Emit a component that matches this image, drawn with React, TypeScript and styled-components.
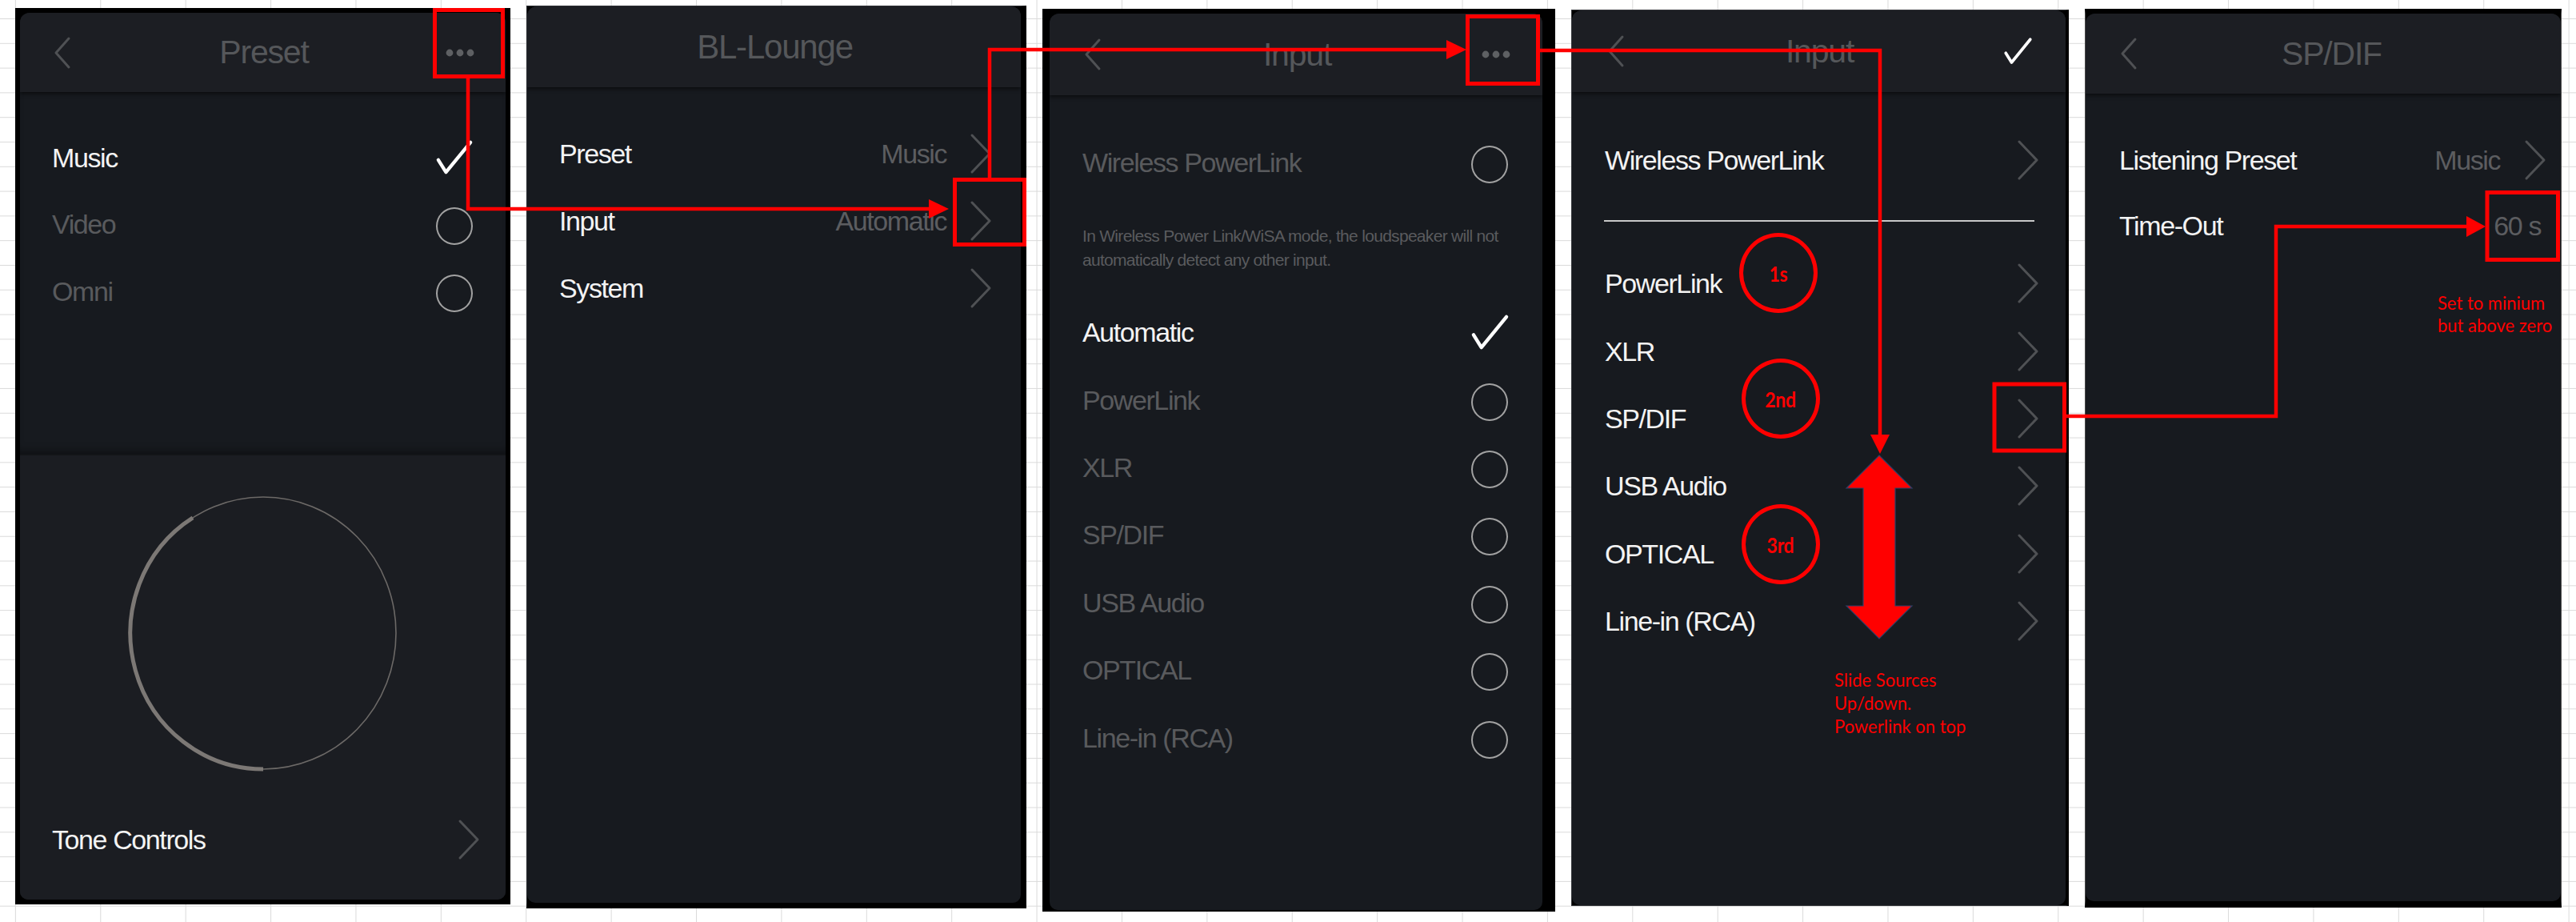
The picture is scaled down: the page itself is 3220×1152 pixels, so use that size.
import React from 'react';
import styled, { createGlobalStyle } from 'styled-components';

const GlobalStyle = createGlobalStyle`
  html, body { margin: 0; padding: 0; background: #ffffff; }
  body { font-family: "Liberation Sans", Arial, sans-serif; }
  #root { width: 3220px; height: 1152px; }
`;

const GRID = '#dadada';
const RED = '#ff0000';

const Sheet = styled.main`
  position: relative;
  box-sizing: border-box;
  width: 3220px;
  height: 1152px;
  overflow: hidden;
  padding-left: 19px;
  display: flex;
  align-items: flex-start;
  gap: 20px;
  background-color: #ffffff;
  background-image:
    linear-gradient(to right, ${GRID} 0, ${GRID} 1px, transparent 1px),
    linear-gradient(to bottom, ${GRID} 0, ${GRID} 1px, transparent 1px);
  background-size: 106.4px 100%, 100% 30.8px;
  background-position: 18.9px 0, 0 23px;
`;

type Edge = { t: string; r: string; b: string; l: string };

const Phone = styled.section<{ $w: number; $h: number; $top: number; $edge: Edge }>`
  box-sizing: border-box;
  flex: 0 0 ${p => p.$w}px;
  height: ${p => p.$h}px;
  margin-top: ${p => p.$top}px;
  background: #000;
  border-top: ${p => p.$edge.t};
  border-right: ${p => p.$edge.r};
  border-bottom: ${p => p.$edge.b};
  border-left: ${p => p.$edge.l};
  display: flex;
  flex-direction: column;
`;

const Screen = styled.div`
  flex: 1;
  min-height: 0;
  display: flex;
  flex-direction: column;
  background: #171a1f;
  border-radius: 12px 12px 10px 10px;
  overflow: hidden;
`;

const Header = styled.header<{ $h: number; $pl?: number; $pr?: number }>`
  position: relative;
  z-index: 1;
  box-sizing: border-box;
  flex: 0 0 ${p => p.$h}px;
  display: grid;
  grid-template-columns: 1fr auto 1fr;
  align-items: center;
  padding: 0 ${p => p.$pr ?? 40}px 0 ${p => p.$pl ?? 42}px;
  background: #1c1e23;
  box-shadow: 0 2px 5px rgba(0, 0, 0, 0.6);
`;

const HeaderSide = styled.div<{ $end?: boolean }>`
  display: flex;
  align-items: center;
  justify-content: ${p => (p.$end ? 'flex-end' : 'flex-start')};
`;

const Title = styled.h1<{ $size?: number; $shift?: number }>`
  margin: 0 0 0 ${p => p.$shift ?? 0}px;
  font-weight: 400;
  font-size: ${p => p.$size ?? 41}px;
  line-height: 1;
  letter-spacing: -1.2px;
  color: #55575a;
  white-space: nowrap;
`;

const Body = styled.div<{ $pt: number }>`
  flex: 1;
  min-height: 0;
  display: flex;
  flex-direction: column;
  padding-top: ${p => p.$pt}px;
`;

const Row = styled.div<{ $h?: number; $pl: number; $pr: number }>`
  flex: 0 0 ${p => p.$h ?? 84}px;
  display: flex;
  align-items: center;
  padding: 0 ${p => p.$pr}px 0 ${p => p.$pl}px;
`;

const Label = styled.span<{ $dim?: boolean }>`
  flex: 1;
  font-size: 34px;
  line-height: 1;
  letter-spacing: -1.4px;
  color: ${p => (p.$dim ? '#595a5d' : '#f3f3f3')};
  white-space: nowrap;
`;

const Value = styled.span<{ $gap?: number }>`
  font-size: 34px;
  line-height: 1;
  letter-spacing: -1.4px;
  color: #5c5d60;
  margin-right: ${p => p.$gap ?? 0}px;
  white-space: nowrap;
`;

const Radio = styled.span`
  box-sizing: border-box;
  flex: 0 0 46px;
  width: 46px;
  height: 47px;
  margin-top: 5px;
  border: 2px solid #a2a2a2;
  border-radius: 50%;
`;

const ListSection = styled.div`
  box-sizing: border-box;
  flex: 0 0 452px;
  display: flex;
  flex-direction: column;
  padding-top: 40px;
  box-shadow: inset 0 -10px 12px -8px rgba(0, 0, 0, 0.45);
`;

const KnobSection = styled.div`
  box-sizing: border-box;
  flex: 1;
  display: flex;
  flex-direction: column;
  background: #1b1d22;
  border-top: 2px solid #121418;
  padding: 48px 0 33px;
`;

const KnobWrap = styled.div`
  flex: 1;
  display: flex;
  justify-content: center;
  align-items: flex-start;
`;

const Note = styled.p`
  margin: 0;
  padding: 35px 40px 33px 41px;
  font-size: 21px;
  line-height: 30px;
  letter-spacing: -0.7px;
  color: #5a5b5e;
  white-space: nowrap;
`;

const Divider = styled.hr`
  flex: 0 0 2px;
  height: 2px;
  margin: 33px 39px 35px 40px;
  border: 0;
  background: #c8c8c8;
`;

const IconSvg = styled.svg`
  display: block;
  flex: 0 0 auto;
  overflow: visible;
`;

const ChevronRight = () => (
  <IconSvg width={28} height={50} viewBox="0 0 28 50">
    <polyline points="3,2 25,25 3,48" fill="none" stroke="#4f5154" strokeWidth={3} strokeLinecap="round" strokeLinejoin="round" />
  </IconSvg>
);

const ChevronLeft = () => (
  <IconSvg width={22} height={40} viewBox="0 0 22 40">
    <polyline points="19,2 3,20 19,38" fill="none" stroke="#4f5154" strokeWidth={3} strokeLinecap="round" strokeLinejoin="round" />
  </IconSvg>
);

const Dots = () => (
  <IconSvg width={36} height={10} viewBox="0 0 36 10">
    <circle cx={5} cy={5} r={4.4} fill="#5e6063" />
    <circle cx={18} cy={5} r={4.4} fill="#5e6063" />
    <circle cx={31} cy={5} r={4.4} fill="#5e6063" />
  </IconSvg>
);

const Check = ({ w = 47, h = 45, sw = 4.5 }: { w?: number; h?: number; sw?: number }) => (
  <IconSvg width={w} height={h} viewBox="0 0 48 46" preserveAspectRatio="none">
    <polyline points="3,26 13,42 45,3" fill="none" stroke="#ffffff" strokeWidth={sw} strokeLinecap="round" strokeLinejoin="round" />
  </IconSvg>
);

const Knob = () => (
  <IconSvg width={340} height={348} viewBox="0 0 340 348">
    <ellipse cx={170} cy={174} rx={166} ry={170} fill="none" stroke="#6c6967" strokeWidth={1.6} />
    <path d="M 170 344 A 166 170 0 0 1 82 29.8" fill="none" stroke="#7c7875" strokeWidth={5} />
  </IconSvg>
);

const Overlay = styled.svg`
  position: absolute;
  z-index: 10;
  left: 0;
  top: 0;
  width: 3220px;
  height: 1152px;
  pointer-events: none;
`;

const Badge = styled.div<{ $x: number; $y: number }>`
  position: absolute;
  z-index: 11;
  left: ${p => p.$x}px;
  top: ${p => p.$y}px;
  box-sizing: border-box;
  width: 98px;
  height: 100px;
  border: 5px solid ${RED};
  border-radius: 50%;
  display: flex;
  align-items: center;
  justify-content: center;
  color: ${RED};
  font-family: Lato, "Open Sans", sans-serif;
  font-weight: 700;
  font-size: 23px;
  line-height: 1;
`;

const BadgeText = styled.span`
  display: inline-block;
  transform: scaleY(1.18);
  letter-spacing: -0.3px;
`;

const Callout = styled.div<{ $x: number; $y: number; $lh: number }>`
  position: absolute;
  z-index: 11;
  left: ${p => p.$x}px;
  top: ${p => p.$y}px;
  color: ${RED};
  font-family: Lato, "Open Sans", sans-serif;
  font-size: 22px;
  line-height: ${p => p.$lh / 1.08}px;
  transform: scaleY(1.08);
  transform-origin: 0 0;
  white-space: nowrap;
`;

const blk = '#000';
const sources = ['PowerLink', 'XLR', 'SP/DIF', 'USB Audio', 'OPTICAL', 'Line-in (RCA)'];

export default function App() {
  return (
    <>
      <GlobalStyle />
      <Sheet>
        {/* Panel 1: Preset */}
        <Phone $w={619} $h={1120} $top={10} $edge={{ t: `6px solid ${blk}`, r: `6px solid ${blk}`, b: `6px solid ${blk}`, l: `6px solid ${blk}` }}>
          <Screen>
            <Header $h={99} $pl={42} $pr={39}>
              <HeaderSide><ChevronLeft /></HeaderSide>
              <Title>Preset</Title>
              <HeaderSide $end><Dots /></HeaderSide>
            </Header>
            <ListSection>
              <Row $h={83.5} $pl={40} $pr={41}>
                <Label>Music</Label>
                <Check w={46} h={44} />
              </Row>
              <Row $h={83.5} $pl={40} $pr={41}>
                <Label $dim>Video</Label>
                <Radio />
              </Row>
              <Row $h={83.5} $pl={40} $pr={41}>
                <Label $dim>Omni</Label>
                <Radio />
              </Row>
            </ListSection>
            <KnobSection>
              <KnobWrap><Knob /></KnobWrap>
              <Row $pl={40} $pr={32}>
                <Label>Tone Controls</Label>
                <ChevronRight />
              </Row>
            </KnobSection>
          </Screen>
        </Phone>

        {/* Panel 2: BL-Lounge */}
        <Phone $w={625} $h={1128} $top={7} $edge={{ t: '1px solid #2e3035', r: `7px solid ${blk}`, b: `7px solid ${blk}`, l: '1px solid #2e3035' }}>
          <Screen>
            <Header $h={101}>
              <HeaderSide />
              <Title $size={42}>BL-Lounge</Title>
              <HeaderSide $end />
            </Header>
            <Body $pt={41}>
              <Row $pl={40} $pr={36}>
                <Label>Preset</Label>
                <Value $gap={29}>Music</Value>
                <ChevronRight />
              </Row>
              <Row $pl={40} $pr={36}>
                <Label>Input</Label>
                <Value $gap={29}>Automatic</Value>
                <ChevronRight />
              </Row>
              <Row $pl={40} $pr={36}>
                <Label>System</Label>
                <ChevronRight />
              </Row>
            </Body>
          </Screen>
        </Phone>

        {/* Panel 3: Input (select) */}
        <Phone $w={641} $h={1128} $top={11} $edge={{ t: `6px solid ${blk}`, r: `16px solid ${blk}`, b: `2px solid ${blk}`, l: `9px solid ${blk}` }}>
          <Screen>
            <Header $h={102} $pl={43} $pr={40}>
              <HeaderSide><ChevronLeft /></HeaderSide>
              <Title>Input</Title>
              <HeaderSide $end><Dots /></HeaderSide>
            </Header>
            <Body $pt={42}>
              <Row $pl={41} $pr={43}>
                <Label $dim>Wireless PowerLink</Label>
                <Radio />
              </Row>
              <Note>
                In Wireless Power Link/WiSA mode, the loudspeaker will not
                <br />
                automatically detect any other input.
              </Note>
              <Row $h={84.4} $pl={41} $pr={42}>
                <Label>Automatic</Label>
                <Check />
              </Row>
              {sources.map(name => (
                <Row key={name} $h={84.4} $pl={41} $pr={43}>
                  <Label $dim>{name}</Label>
                  <Radio />
                </Row>
              ))}
            </Body>
          </Screen>
        </Phone>

        {/* Panel 4: Input (order) */}
        <Phone $w={622} $h={1120} $top={12} $edge={{ t: '1px solid #34363a', r: `4px solid ${blk}`, b: '1px solid #34363a', l: '1px solid #34363a' }}>
          <Screen>
            <Header $h={102} $pl={44} $pr={42}>
              <HeaderSide><ChevronLeft /></HeaderSide>
              <Title>Input</Title>
              <HeaderSide $end><Check w={35} h={34} sw={5} /></HeaderSide>
            </Header>
            <Body $pt={43}>
              <Row $pl={41} $pr={33}>
                <Label>Wireless PowerLink</Label>
                <ChevronRight />
              </Row>
              <Divider />
              {sources.map(name => (
                <Row key={name} $h={84.4} $pl={41} $pr={33}>
                  <Label>{name}</Label>
                  <ChevronRight />
                </Row>
              ))}
            </Body>
          </Screen>
        </Phone>

        {/* Panel 5: SP/DIF */}
        <Phone $w={596} $h={1123} $top={11} $edge={{ t: `6px solid ${blk}`, r: '1px solid #4a4a4a', b: `8px solid ${blk}`, l: '1px solid #4a4a4a' }}>
          <Screen>
            <Header $h={100} $pl={43} $pr={40}>
              <HeaderSide><ChevronLeft /></HeaderSide>
              <Title $shift={18}>SP/DIF</Title>
              <HeaderSide $end />
            </Header>
            <Body $pt={42}>
              <Row $h={82} $pl={42} $pr={18}>
                <Label>Listening Preset</Label>
                <Value $gap={30}>Music</Value>
                <ChevronRight />
              </Row>
              <Row $h={82} $pl={42} $pr={25}>
                <Label>Time-Out</Label>
                <Value>60 s</Value>
              </Row>
            </Body>
          </Screen>
        </Phone>

        {/* Annotations */}
        <Overlay viewBox="0 0 3220 1152">
          <g fill="none" stroke={RED} strokeWidth={5}>
            <rect x={543.5} y={12.5} width={85} height={83} />
            <rect x={1193.5} y={224.5} width={87} height={81} />
            <rect x={1834.5} y={20.5} width={88} height={84} />
            <rect x={2493} y={480} width={87.5} height={83} />
            <rect x={3109} y={240.5} width={88.5} height={84} />
          </g>
          <g fill="none" stroke={RED} strokeWidth={4.5}>
            <polyline points="585,98 585,261 1164,261" />
            <polyline points="1237,222 1237,62 1810,62" />
            <polyline points="1925,63 2350,63 2350,545" />
            <polyline points="2583,520 2845,520 2845,283 3085,283" />
          </g>
          <g fill={RED}>
            <polygon points="1161,249 1186,261 1161,273" />
            <polygon points="1808,50 1833,62 1808,74" />
            <polygon points="2338,543 2350,567 2362,543" />
            <polygon points="3083,270 3107,283 3083,296" />
          </g>
          <polygon
            points="2349,569 2390,610 2369,610 2369,757 2390,757 2349,798 2308,757 2329,757 2329,610 2308,610"
            fill={RED}
            stroke="#2f3f66"
            strokeWidth={1.2}
          />
        </Overlay>
        <Badge $x={2174} $y={291}><BadgeText>1s</BadgeText></Badge>
        <Badge $x={2176.5} $y={448}><BadgeText>2nd</BadgeText></Badge>
        <Badge $x={2176.5} $y={630}><BadgeText>3rd</BadgeText></Badge>
        <Callout $x={2293} $y={834.5} $lh={29}>
          Slide Sources
          <br />
          Up/down.
          <br />
          Powerlink on top
        </Callout>
        <Callout $x={3047} $y={364} $lh={28}>
          Set to minium
          <br />
          but above zero
        </Callout>
      </Sheet>
    </>
  );
}
